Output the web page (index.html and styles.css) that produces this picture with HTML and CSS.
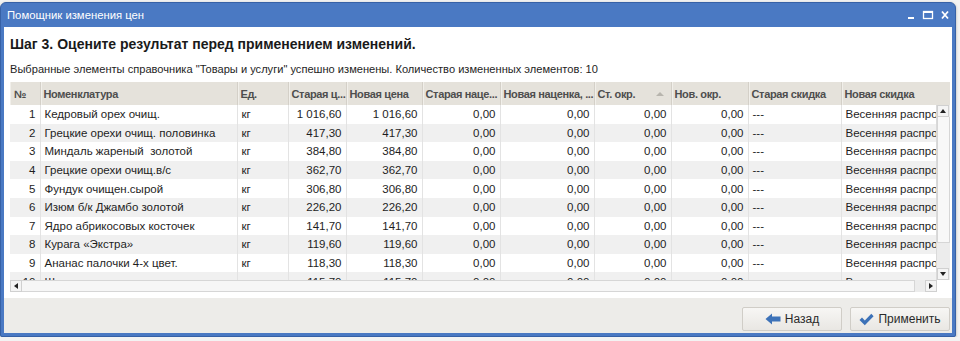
FILE: index.html
```html
<!DOCTYPE html>
<html lang="ru">
<head>
    <meta charset="UTF-8">
    <title>Помощник изменения цен</title>
    <link rel="stylesheet" href="styles.css">
</head>
<body>
    <div class="window">
        <div class="titlebar">
            <span class="title">Помощник изменения цен</span>
            <svg class="win-buttons" width="44" height="10" viewBox="0 0 44 10">
                <rect x="2" y="7" width="6" height="2" fill="#fff"/>
                <rect x="17.5" y="1.5" width="9" height="7" fill="none" stroke="#fff" stroke-width="1.3"/>
                <rect x="17" y="1" width="10" height="2" fill="#fff"/>
                <path d="M36 1.5 L42 8.5 M42 1.5 L36 8.5" stroke="#fff" stroke-width="1.8"/>
            </svg>
        </div>

        <div class="content">
            <div class="main">
                <h1>Шаг 3. Оцените результат перед применением изменений.</h1>
                <p class="info">Выбранные элементы справочника "Товары и услуги" успешно изменены. Количество измененных элементов: 10</p>

                <div class="grid">
                    <table class="grid-head">
                        <colgroup>
                            <col style="width:30px"><col style="width:197px"><col style="width:51px"><col style="width:58px"><col style="width:76px"><col style="width:78px"><col style="width:94px"><col style="width:77px"><col style="width:77px"><col style="width:93px"><col style="width:109px">
                        </colgroup>
                        <tr>
                            <th>№</th>
                            <th>Номенклатура</th>
                            <th>Ед.</th>
                            <th>Старая ц...</th>
                            <th>Новая цена</th>
                            <th>Старая наце...</th>
                            <th>Новая наценка, ...</th>
                            <th class="sorted">Ст. окр.<span class="sort-arrow"></span></th>
                            <th>Нов. окр.</th>
                            <th>Старая скидка</th>
                            <th>Новая скидка</th>
                        </tr>
                    </table>

                    <div class="grid-main">
                        <div class="grid-rows">
                            <table class="grid-body">
                                <colgroup>
                                    <col style="width:30px"><col style="width:197px"><col style="width:51px"><col style="width:58px"><col style="width:76px"><col style="width:78px"><col style="width:94px"><col style="width:77px"><col style="width:77px"><col style="width:93px"><col style="width:109px">
                                </colgroup>
                                <tr><td class="num">1</td><td>Кедровый орех очищ.</td><td>кг</td><td class="num">1&nbsp;016,60</td><td class="num">1&nbsp;016,60</td><td class="num">0,00</td><td class="num">0,00</td><td class="num">0,00</td><td class="num">0,00</td><td>---</td><td>Весенняя распродажа</td></tr>
                                <tr><td class="num">2</td><td>Грецкие орехи очищ. половинка</td><td>кг</td><td class="num">417,30</td><td class="num">417,30</td><td class="num">0,00</td><td class="num">0,00</td><td class="num">0,00</td><td class="num">0,00</td><td>---</td><td>Весенняя распродажа</td></tr>
                                <tr><td class="num">3</td><td>Миндаль жареный&nbsp; золотой</td><td>кг</td><td class="num">384,80</td><td class="num">384,80</td><td class="num">0,00</td><td class="num">0,00</td><td class="num">0,00</td><td class="num">0,00</td><td>---</td><td>Весенняя распродажа</td></tr>
                                <tr><td class="num">4</td><td>Грецкие орехи очищ.в/с</td><td>кг</td><td class="num">362,70</td><td class="num">362,70</td><td class="num">0,00</td><td class="num">0,00</td><td class="num">0,00</td><td class="num">0,00</td><td>---</td><td>Весенняя распродажа</td></tr>
                                <tr><td class="num">5</td><td>Фундук очищен.сырой</td><td>кг</td><td class="num">306,80</td><td class="num">306,80</td><td class="num">0,00</td><td class="num">0,00</td><td class="num">0,00</td><td class="num">0,00</td><td>---</td><td>Весенняя распродажа</td></tr>
                                <tr><td class="num">6</td><td>Изюм б/к Джамбо золотой</td><td>кг</td><td class="num">226,20</td><td class="num">226,20</td><td class="num">0,00</td><td class="num">0,00</td><td class="num">0,00</td><td class="num">0,00</td><td>---</td><td>Весенняя распродажа</td></tr>
                                <tr><td class="num">7</td><td>Ядро абрикосовых косточек</td><td>кг</td><td class="num">141,70</td><td class="num">141,70</td><td class="num">0,00</td><td class="num">0,00</td><td class="num">0,00</td><td class="num">0,00</td><td>---</td><td>Весенняя распродажа</td></tr>
                                <tr><td class="num">8</td><td>Курага «Экстра»</td><td>кг</td><td class="num">119,60</td><td class="num">119,60</td><td class="num">0,00</td><td class="num">0,00</td><td class="num">0,00</td><td class="num">0,00</td><td>---</td><td>Весенняя распродажа</td></tr>
                                <tr><td class="num">9</td><td>Ананас палочки 4-х цвет.</td><td>кг</td><td class="num">118,30</td><td class="num">118,30</td><td class="num">0,00</td><td class="num">0,00</td><td class="num">0,00</td><td class="num">0,00</td><td>---</td><td>Весенняя распродажа</td></tr>
                                <tr><td class="num">10</td><td>Шиповник</td><td>кг</td><td class="num">115,70</td><td class="num">115,70</td><td class="num">0,00</td><td class="num">0,00</td><td class="num">0,00</td><td class="num">0,00</td><td>---</td><td>Весенняя распродажа</td></tr>
                            </table>
                        </div>
                        <div class="vscroll">
                            <div class="sb-btn"><span class="arr up"></span></div>
                            <div class="vthumb"></div>
                            <div class="sb-space"></div>
                            <div class="sb-btn"><span class="arr down"></span></div>
                        </div>
                    </div>

                    <div class="hscroll">
                        <div class="sb-btn"><span class="arr left"></span></div>
                        <div class="hthumb"></div>
                        <div class="sb-btn"><span class="arr right"></span></div>
                        <div class="sb-corner"></div>
                    </div>
                </div>
            </div>

            <div class="footer">
                <button class="btn">
                    <svg width="16" height="12" viewBox="0 0 16 12"><path d="M0.5 6 L7 0.5 L7 3.5 L15.5 3.5 L15.5 8.5 L7 8.5 L7 11.5 Z" fill="#3d72b8"/></svg>
                    Назад
                </button>
                <button class="btn">
                    <svg width="15" height="13" viewBox="0 0 15 13"><path d="M0.5 7 L3 4.5 L5.8 7.6 L12.3 0.8 L14.6 3.2 L5.8 12.3 Z" fill="#3d72b8"/></svg>
                    Применить
                </button>
            </div>
        </div>
    </div>
</body>
</html>
```

FILE: styles.css
```css
body {
    margin: 0;
    background-color: #f3f3f3;
    font-family: "Liberation Sans", Arial, sans-serif;
    color: #1e1e1e;
}

.window {
    box-sizing: border-box;
    width: 956px;
    height: 335px;
    margin-top: 2px;
    background-color: #4a79c3;
    border: 1px solid #3761a6;
    border-radius: 6px 6px 2px 2px;
    padding: 0 3px 3px 3px;
    display: flex;
    flex-direction: column;
    box-shadow: 0 1px 3px rgba(0, 0, 0, 0.3);
}

.titlebar {
    height: 24px;
    display: flex;
    align-items: center;
    padding: 0 2px 0 3px;
    color: white;
    font-size: 11.3px;
}

.win-buttons {
    margin-left: auto;
}

.content {
    flex: 1;
    display: flex;
    flex-direction: column;
    background-color: white;
}

.main {
    padding: 7px 2px 6px 6px;
}

h1 {
    margin: 0;
    font-size: 14px;
    line-height: 20px;
    font-weight: bold;
    color: #1a1a1a;
}

.info {
    margin: 8px 0 6px 0;
    font-size: 11.1px;
    line-height: 14px;
}

/* table */
.grid {
    width: 940px;
}

.grid table {
    table-layout: fixed;
    border-collapse: collapse;
    width: 940px;
    font-size: 11.5px;
}

.grid-head th {
    height: 23px;
    padding: 0 0 0 3px;
    background-color: #e5e2db;
    color: #4e4e4e;
    font-weight: bold;
    font-size: 11px;
    letter-spacing: -0.35px;
    text-align: left;
    white-space: nowrap;
    overflow: hidden;
    border-right: 1px solid #d4d0c8;
    box-shadow: inset 1px 0 0 #f1efea;
}

.grid-head th:first-child {
    padding-left: 4px;
}

.grid-head th:last-child {
    border-right: none;
}

.sort-arrow {
    float: right;
    margin: 4px 7px 0 0;
    width: 0;
    height: 0;
    border-left: 4px solid transparent;
    border-right: 4px solid transparent;
    border-bottom: 4px solid #b8b5ae;
}

.grid-main {
    display: flex;
    height: 175px;
}

.grid-rows {
    width: 927px;
    overflow: hidden;
}

.grid-body td {
    height: 18.6px;
    padding: 0 4px;
    line-height: 18px;
    white-space: nowrap;
    overflow: hidden;
    border-right: 1px solid #e3e3e3;
}

.grid-body tr:nth-child(even) td {
    background-color: #f0f0f0;
}

.grid-body td.num {
    text-align: right;
}

/* scrollbars */
.vscroll {
    width: 13px;
    display: flex;
    flex-direction: column;
    background-color: #ececec;
    border-left: 1px solid #dadada;
}

.sb-btn {
    width: 12px;
    height: 12px;
    display: flex;
    align-items: center;
    justify-content: center;
    background-color: #f4f4f4;
    border: 1px solid #d0d0d0;
    box-sizing: border-box;
}

.vthumb {
    height: 125px;
    background-color: #f8f8f8;
    border: 1px solid #d6d6d6;
    border-top: none;
}

.sb-space {
    flex: 1;
}

.arr {
    width: 0;
    height: 0;
}

.arr.up {
    border-left: 3px solid transparent;
    border-right: 3px solid transparent;
    border-bottom: 4px solid #222;
}

.arr.down {
    border-left: 3px solid transparent;
    border-right: 3px solid transparent;
    border-top: 4px solid #222;
}

.arr.left {
    border-top: 3px solid transparent;
    border-bottom: 3px solid transparent;
    border-right: 4px solid #222;
}

.arr.right {
    border-top: 3px solid transparent;
    border-bottom: 3px solid transparent;
    border-left: 4px solid #222;
}

.hscroll {
    display: flex;
    height: 12px;
    background-color: #ececec;
}

.hthumb {
    flex: 1;
    margin-right: 10px;
    background-color: #f6f6f6;
    border: 1px solid #d6d6d6;
    border-left: none;
}

.sb-corner {
    width: 13px;
    background-color: white;
}

/* footer */
.footer {
    flex: 1;
    display: flex;
    justify-content: flex-end;
    align-items: flex-start;
    gap: 8px;
    padding: 9px 2px 0 0;
    background-color: #edece9;
}

.btn {
    display: flex;
    align-items: center;
    justify-content: center;
    gap: 4px;
    width: 100px;
    height: 24px;
    padding: 0;
    font-family: "Liberation Sans", Arial, sans-serif;
    font-size: 12px;
    color: #2a2a2a;
    background: linear-gradient(#f7f6f4, #e9e7e3);
    border: 1px solid #d0cdc7;
    border-radius: 2px;
}
```
